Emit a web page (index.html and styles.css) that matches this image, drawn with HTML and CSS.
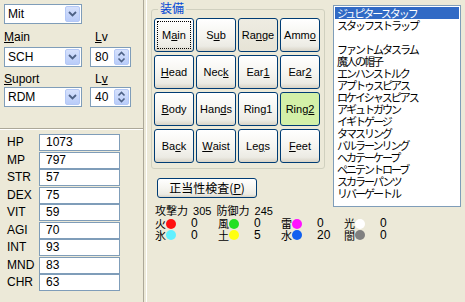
FILE: index.html
```html
<!DOCTYPE html>
<html lang="ja">
<head>
<meta charset="utf-8">
<title>Equip</title>
<link rel="stylesheet" href="styles.css">
</head>
<body>
<div class="app">
  <div class="left">
    <div class="controls">
      <div class="combo wide"><span class="val">Mit</span><span class="dd"><svg width="9" height="6" viewBox="0 0 9 6"><path d="M1 1 L4.5 4.5 L8 1" fill="none" stroke="#4D6185" stroke-width="1.8"/></svg></span></div>
      <div class="lblrow first"><span class="lbl"><u>M</u>ain</span><span class="lbl lv"><u>L</u>v</span></div>
      <div class="ctlrow">
        <div class="combo"><span class="val">SCH</span><span class="dd"><svg width="9" height="6" viewBox="0 0 9 6"><path d="M1 1 L4.5 4.5 L8 1" fill="none" stroke="#4D6185" stroke-width="1.8"/></svg></span></div>
        <div class="spin"><span class="val">80</span><span class="sb"><svg width="9" height="14" viewBox="0 0 9 14"><path d="M1.5 5.5 L4.5 2.5 L7.5 5.5" fill="none" stroke="#4D6185" stroke-width="1.6"/><path d="M1.5 8.5 L4.5 11.5 L7.5 8.5" fill="none" stroke="#4D6185" stroke-width="1.6"/></svg></span></div>
      </div>
      <div class="lblrow second"><span class="lbl"><u>S</u>uport</span><span class="lbl lv">L<u>v</u></span></div>
      <div class="ctlrow last">
        <div class="combo"><span class="val">RDM</span><span class="dd"><svg width="9" height="6" viewBox="0 0 9 6"><path d="M1 1 L4.5 4.5 L8 1" fill="none" stroke="#4D6185" stroke-width="1.8"/></svg></span></div>
        <div class="spin"><span class="val">40</span><span class="sb"><svg width="9" height="14" viewBox="0 0 9 14"><path d="M1.5 5.5 L4.5 2.5 L7.5 5.5" fill="none" stroke="#4D6185" stroke-width="1.6"/><path d="M1.5 8.5 L4.5 11.5 L7.5 8.5" fill="none" stroke="#4D6185" stroke-width="1.6"/></svg></span></div>
      </div>
    </div>
    <div class="hsep"></div>
    <div class="stats">
      <span class="sl">HP</span><span class="sv">1073</span>
      <span class="sl">MP</span><span class="sv">797</span>
      <span class="sl">STR</span><span class="sv">57</span>
      <span class="sl">DEX</span><span class="sv">75</span>
      <span class="sl">VIT</span><span class="sv">59</span>
      <span class="sl">AGI</span><span class="sv">70</span>
      <span class="sl">INT</span><span class="sv">93</span>
      <span class="sl">MND</span><span class="sv">83</span>
      <span class="sl">CHR</span><span class="sv">63</span>
    </div>
  </div>
  <div class="vsep"></div>
  <div class="middle">
    <div class="group">
      <div class="gtitle">装備</div>
      <div class="slots">
        <div class="btn focus"><span class="fr">M<u>a</u>in</span></div>
        <div class="btn">S<u>u</u>b</div>
        <div class="btn range">Ra<u>n</u>ge</div>
        <div class="btn">Amm<u>o</u></div>
        <div class="btn"><u>H</u>ead</div>
        <div class="btn">Nec<u>k</u></div>
        <div class="btn">Ear<u>1</u></div>
        <div class="btn">Ear<u>2</u></div>
        <div class="btn"><u>B</u>ody</div>
        <div class="btn">Han<u>d</u>s</div>
        <div class="btn">Ring1</div>
        <div class="btn green">Ring<u>2</u></div>
        <div class="btn">Ba<u>c</u>k</div>
        <div class="btn"><u>W</u>aist</div>
        <div class="btn">Le<u>g</u>s</div>
        <div class="btn"><u>F</u>eet</div>
      </div>
    </div>
    <div class="btn check">正当性検査(<u>P</u>)</div>
    <div class="info">
      <div class="atk">攻撃力 305 防御力 245</div>
      <div class="elems">
        <div class="el"><span class="ek">火</span><span class="dot fire"></span><span class="ev">0</span></div>
        <div class="el"><span class="ek">風</span><span class="dot wind"></span><span class="ev">0</span></div>
        <div class="el"><span class="ek">雷</span><span class="dot thunder"></span><span class="ev">0</span></div>
        <div class="el"><span class="ek">光</span><span class="dot light"></span><span class="ev">0</span></div>
        <div class="el"><span class="ek">氷</span><span class="dot ice"></span><span class="ev">0</span></div>
        <div class="el"><span class="ek">土</span><span class="dot earth"></span><span class="ev">5</span></div>
        <div class="el"><span class="ek">水</span><span class="dot water"></span><span class="ev">20</span></div>
        <div class="el"><span class="ek">闇</span><span class="dot dark"></span><span class="ev">0</span></div>
      </div>
    </div>
  </div>
  <div class="right">
    <ul class="list">
      <li class="sel">ジュピタースタッフ</li>
      <li>スタッフストラップ</li>
      <li>&nbsp;</li>
      <li>ファントムタスラム</li>
      <li>魔人の帽子</li>
      <li>エンハンストルク</li>
      <li>アプトゥスピアス</li>
      <li>ロケイシャスピアス</li>
      <li>アギュトガウン</li>
      <li>イギトゲージ</li>
      <li>タマスリング</li>
      <li>バルラーンリング</li>
      <li>ヘカテーケープ</li>
      <li>ペニテントローブ</li>
      <li>スカラーパンツ</li>
      <li>リバーゲートル</li>
    </ul>
  </div>
</div>
</body>
</html>
```
FILE: styles.css
```css
* { box-sizing: border-box; }
html, body { margin: 0; padding: 0; }
body {
  background: #ECE9D8;
  font-family: "Liberation Sans", "Noto Sans CJK JP", sans-serif;
  font-size: 11px;
  color: #000;
  width: 465px;
  height: 302px;
  overflow: hidden;
}
u { text-decoration: underline; text-underline-offset: 1px; }
.app { display: flex; height: 302px; }

/* left panel */
.left { width: 143px; display: flex; flex-direction: column; }
.controls { height: 128px; padding: 4px 0 0 4px; }
.combo {
  width: 78px; height: 20px;
  border: 1px solid #7F9DB9; background: #fff;
  display: flex; align-items: center; justify-content: space-between;
  padding: 1px 1px 1px 3px;
  font-size: 12px;
}
.combo .val { line-height: 16px; }
.dd, .sb {
  width: 15px; height: 16px;
  background: linear-gradient(#D6E1FC, #B9CCF9);
  border: 1px solid #B4C8F6;
  border-radius: 2px;
  display: flex; align-items: center; justify-content: center;
}
.lblrow { display: flex; height: 14px; line-height: 14px; font-size: 12px; }
.lblrow.first { margin-top: 6px; }
.lblrow.second { margin-top: 5px; }
.lblrow .lbl:first-child { width: 91px; }
.ctlrow { display: flex; gap: 8px; margin-top: 3px; }
.ctlrow.last { margin-top: 1px; }
.spin {
  width: 41px; height: 20px;
  border: 1px solid #7F9DB9; background: #fff;
  display: flex; align-items: center; justify-content: space-between;
  padding: 1px 1px 1px 4px;
  font-size: 12px;
}
.spin .sb { width: 15px; }
.hsep { height: 2px; border-top: 1px solid #ACA899; border-bottom: 1px solid #fff; }
.stats {
  display: grid;
  grid-template-columns: 35px 81px;
  grid-auto-rows: 17.5px;
  padding: 4px 0 0 4px;
}
.sl { padding-left: 3px; line-height: 17px; font-size: 12px; }
.sv {
  height: 17px; border: 1px solid #7F9DB9; background: #fff;
  padding-left: 6px; line-height: 15px; font-size: 12px;
}
.vsep { width: 4px; border-left: 1px solid #ACA899; border-right: 1px solid #fff; background: #ECE9D8; }

/* middle */
.middle { width: 182px; display: flex; flex-direction: column; }
.group {
  margin: 9px 0 0 4px;
  width: 174px;
  border: 1px solid #D0D0BF;
  border-radius: 3px;
  padding: 0 4px 5px 2px;
}
.gtitle {
  width: max-content;
  margin: -8px 0 0 4px;
  padding: 0 2px;
  background: #ECE9D8;
  color: #0046D5;
  line-height: 14px;
  font-size: 12px;
}
.slots {
  margin-top: 2px;
  display: grid;
  grid-template-columns: repeat(4, 40px);
  grid-auto-rows: 34px;
  gap: 3px 2px;
}
.btn {
  border: 1px solid #003C74;
  border-radius: 3px;
  background: linear-gradient(#FFFFFF 0%, #F6F5F0 50%, #ECEBE4 85%, #D8D3C6 100%);
  display: flex; align-items: center; justify-content: center;
  font-size: 11px;
}
.btn.range { background: linear-gradient(#EEECE2, #E6E3D6); }
.btn.green { background: #D3F0A8; }
.btn.focus { padding: 2px; }
.btn.focus .fr {
  flex: 1; align-self: stretch;
  border: 1px dotted #000;
  display: flex; align-items: center; justify-content: center;
}
.btn.check {
  margin: 9px 0 0 10px;
  width: 100px; height: 20px;
  font-size: 12px;
  font-family: "Noto Sans CJK JP", sans-serif;
  line-height: 16px;
}
.info { margin: 7px 0 0 8px; font-family: "Noto Sans CJK JP", sans-serif; font-size: 11px; }
.atk {
  line-height: 12px; height: 12px;
  font-family: "Liberation Sans", "Noto Sans CJK JP", sans-serif;
  word-spacing: 2px;
}
.elems { display: grid; grid-template-columns: repeat(4, 63px); grid-auto-rows: 11.5px; margin-top: 1px; }
.el { display: flex; align-items: center; line-height: 11px; }
.ek { width: 11px; }
.dot { width: 10px; height: 10px; border-radius: 50%; flex: none; }
.ev { margin-left: 15px; font-family: "Liberation Sans", sans-serif; font-size: 12px; }
.fire { background: #FF1010; }
.wind { background: #22E022; }
.thunder { background: #FF10FF; }
.light { background: #FFFFFF; }
.ice { background: #60F0FF; }
.earth { background: #FFFF10; }
.water { background: #1060F0; }
.dark { background: #808080; }

/* right list */
.right { padding: 5px 0 0 4px; }
.list {
  margin: 0; padding: 1px;
  list-style: none;
  width: 128px; height: 202px;
  border: 1px solid #7F9DB9;
  background: #fff;
  font-family: "Noto Sans CJK JP", sans-serif;
  font-size: 11px;
  letter-spacing: -2px;
}
.list li { height: 12px; line-height: 12px; padding-left: 2px; white-space: nowrap; }
.list li.sel { background: #316AC5; color: #fff; }
```
